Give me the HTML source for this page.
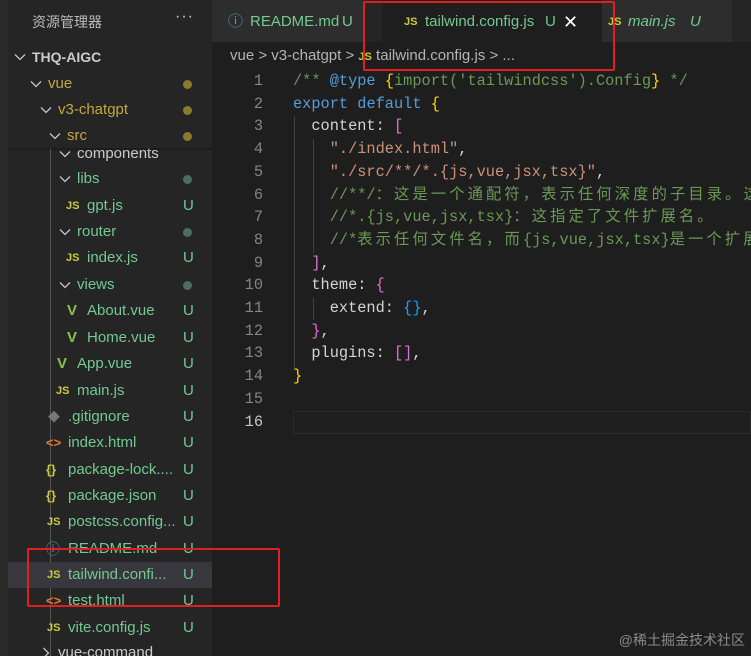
<!DOCTYPE html>
<html><head><meta charset="utf-8"><style>
*{margin:0;padding:0;box-sizing:border-box}
body{width:751px;height:656px;overflow:hidden;background:#1e1e1e;font-family:"Liberation Sans","Noto Sans CJK SC",sans-serif;position:relative}
.strip{position:absolute;left:0;top:0;width:8px;height:656px;background:#2a2a2a}
.side{position:absolute;left:8px;top:0;width:204px;height:656px;background:#252526;overflow:hidden}
.row{position:absolute;left:0;width:204px;height:26px;font-size:15px;line-height:26px;white-space:nowrap}
.row .n{position:absolute}
.row .u{position:absolute;left:175px;color:#73c991}
.dot{position:absolute;left:175px;top:9px;width:9px;height:9px;border-radius:50%}
.g{color:#73c991}.y{color:#c3a83c}
.chev{position:absolute;top:9px;width:12px;height:8px}
.js{position:absolute;font-size:11px;font-weight:bold;color:#cbcb41;top:0}
.vv{position:absolute;color:#8dc149;font-size:15px;font-weight:bold}
.guide{position:absolute;left:42px;top:148px;width:1px;height:508px;background:#585858}
.tabs{position:absolute;left:212px;top:0;width:539px;height:42px;background:#252526}
.tab{position:absolute;top:0;height:42px;font-size:15px;line-height:44px;white-space:nowrap}
.code{position:absolute;left:212px;top:70px;font-family:"Liberation Mono","Noto Sans CJK SC",monospace;font-size:15.3px}
.ln{position:absolute;left:0;width:51px;text-align:right;color:#858585;height:23px;line-height:23px}
.cl{position:absolute;left:81px;color:#d4d4d4;white-space:pre;height:23px;line-height:23px}
.cm{color:#6a9955}.kw{color:#569cd6}.st{color:#ce9178}.b1{color:#ffd700}.b2{color:#da70d6}.b3{color:#179fff}.cc{color:#6a9955}
.cj{letter-spacing:3.1px}
.red{position:absolute;border:2px solid #e02020;border-radius:2px}
</style></head><body>
<svg width="0" height="0" style="position:absolute"><defs><symbol id="cv" viewBox="0 0 12 8"><path d="M1 1.5 L6 6.5 L11 1.5" fill="none" stroke="#c5c5c5" stroke-width="1.3"/></symbol></defs></svg>
<div class="strip"></div>
<div class="side">
 <div style="position:absolute;left:24px;top:12px;font-size:14px;color:#bbb">资源管理器</div>
 <div style="position:absolute;left:167px;top:8px;font-size:16px;color:#ccc;letter-spacing:1px">···</div>
 <div class="guide"></div>
 <div class="row" style="top:44px"><svg class="chev" style="left:6px"><use href="#cv"/></svg><span class="n" style="left:24px;color:#ccc;font-weight:bold;font-size:14px">THQ-AIGC</span></div>
 <div class="row" style="top:71px"><svg class="chev" style="left:22px"><use href="#cv"/></svg><span class="n y" style="left:40px">vue</span><span class="dot" style="background:#8a7b2c"></span></div>
 <div class="row" style="top:97px"><svg class="chev" style="left:32px"><use href="#cv"/></svg><span class="n y" style="left:50px">v3-chatgpt</span><span class="dot" style="background:#8a7b2c"></span></div>
 <div class="row" style="top:123px"><svg class="chev" style="left:41px"><use href="#cv"/></svg><span class="n y" style="left:59px">src</span><span class="dot" style="background:#8a7b2c"></span></div>
 <div class="row" style="top:141px"><svg class="chev" style="left:51px"><use href="#cv"/></svg><span class="n" style="left:69px;color:#ccc">components</span></div>
 <div style="position:absolute;left:0;top:148px;width:204px;height:3px;background:linear-gradient(#111,transparent);opacity:.6"></div>
 <div class="row" style="top:166px"><svg class="chev" style="left:51px"><use href="#cv"/></svg><span class="n g" style="left:69px">libs</span><span class="dot" style="background:#4c6e5c"></span></div>
 <div class="row" style="top:193px"><span class="js" style="left:58px">JS</span><span class="n g" style="left:79px">gpt.js</span><span class="u">U</span></div>
 <div class="row" style="top:219px"><svg class="chev" style="left:51px"><use href="#cv"/></svg><span class="n g" style="left:69px">router</span><span class="dot" style="background:#4c6e5c"></span></div>
 <div class="row" style="top:245px"><span class="js" style="left:58px">JS</span><span class="n g" style="left:79px">index.js</span><span class="u">U</span></div>
 <div class="row" style="top:272px"><svg class="chev" style="left:51px"><use href="#cv"/></svg><span class="n g" style="left:69px">views</span><span class="dot" style="background:#4c6e5c"></span></div>
 <div class="row" style="top:298px"><span class="vv" style="left:59px">V</span><span class="n g" style="left:79px">About.vue</span><span class="u">U</span></div>
 <div class="row" style="top:325px"><span class="vv" style="left:59px">V</span><span class="n g" style="left:79px">Home.vue</span><span class="u">U</span></div>
 <div class="row" style="top:351px"><span class="vv" style="left:49px">V</span><span class="n g" style="left:69px">App.vue</span><span class="u">U</span></div>
 <div class="row" style="top:378px"><span class="js" style="left:48px">JS</span><span class="n g" style="left:69px">main.js</span><span class="u">U</span></div>
 <div class="row" style="top:404px"><span style="position:absolute;left:40px;color:#777;font-size:12px">◆</span><span class="n g" style="left:60px">.gitignore</span><span class="u">U</span></div>
 <div class="row" style="top:430px"><span style="position:absolute;left:38px;color:#e37933;font-size:13px;font-weight:bold">&lt;&gt;</span><span class="n g" style="left:60px">index.html</span><span class="u">U</span></div>
 <div class="row" style="top:457px"><span style="position:absolute;left:38px;color:#cbcb41;font-size:13px;font-weight:bold">{}</span><span class="n g" style="left:60px">package-lock....</span><span class="u">U</span></div>
 <div class="row" style="top:483px"><span style="position:absolute;left:38px;color:#cbcb41;font-size:13px;font-weight:bold">{}</span><span class="n g" style="left:60px">package.json</span><span class="u">U</span></div>
 <div class="row" style="top:509px"><span class="js" style="left:39px">JS</span><span class="n g" style="left:60px">postcss.config...</span><span class="u">U</span></div>
 <div class="row" style="top:536px"><span style="position:absolute;left:38px;color:#519aba;font-size:14px">ⓘ</span><span class="n g" style="left:60px">README.md</span><span class="u">U</span></div>
 <div class="row" style="top:562px;background:#37373d"><span class="js" style="left:39px">JS</span><span class="n g" style="left:60px">tailwind.confi...</span><span class="u">U</span></div>
 <div class="row" style="top:588px"><span style="position:absolute;left:38px;color:#e37933;font-size:13px;font-weight:bold">&lt;&gt;</span><span class="n g" style="left:60px">test.html</span><span class="u">U</span></div>
 <div class="row" style="top:615px"><span class="js" style="left:39px">JS</span><span class="n g" style="left:60px">vite.config.js</span><span class="u">U</span></div>
 <div class="row" style="top:640px"><svg class="chev" style="left:32px;transform:rotate(-90deg)"><use href="#cv"/></svg><span class="n" style="left:50px;color:#ccc">vue-command</span></div>
</div>
<div class="tabs">
 <div class="tab" style="left:0;width:152px;background:#2d2d2d"><span style="position:absolute;left:16px;color:#519aba">ⓘ</span><span style="position:absolute;left:38px;color:#73c991">README.md</span><span style="position:absolute;left:130px;color:#73c991">U</span></div>
 <div class="tab" style="left:170px;width:220px;background:#1e1e1e"><span style="position:absolute;left:22px;color:#cbcb41;font-size:11px;font-weight:bold">JS</span><span style="position:absolute;left:43px;color:#73c991">tailwind.config.js</span><span style="position:absolute;left:163px;color:#73c991">U</span><span style="position:absolute;left:181px;color:#fff;font-size:18px">✕</span></div>
 <div class="tab" style="left:390px;width:130px;background:#2d2d2d"><span style="position:absolute;left:6px;color:#cbcb41;font-size:11px;font-weight:bold">JS</span><span style="position:absolute;left:26px;color:#73c991;font-style:italic">main.js</span><span style="position:absolute;left:88px;color:#73c991;font-style:italic">U</span></div>
</div>
<div style="position:absolute;left:230px;top:47px;font-size:15px;color:#b4b4b4;white-space:nowrap">vue &gt; v3-chatgpt &gt; <span style="color:#cbcb41;font-size:11px;font-weight:bold">JS</span> tailwind.config.js &gt; ...</div>
<div style="position:absolute;left:293px;top:411px;width:458px;height:23px;border:1px solid #2a2a2a"></div>
<div style="position:absolute;left:294px;top:116px;width:1px;height:252px;background:#404040"></div>
<div style="position:absolute;left:313px;top:139px;width:1px;height:114px;background:#404040"></div>
<div style="position:absolute;left:313px;top:298px;width:1px;height:22px;background:#404040"></div>
<div class="code">
 <div class="ln" style="top:0">1</div><div class="cl" style="top:0"><span class="cm">/** </span><span class="kw">@type</span> <span class="b1">{</span><span class="cm">import('tailwindcss').Config</span><span class="b1">}</span><span class="cm"> */</span></div>
 <div class="ln" style="top:22.7px">2</div><div class="cl" style="top:22.7px"><span class="kw">export</span> <span class="kw">default</span> <span class="b1">{</span></div>
 <div class="ln" style="top:45.4px">3</div><div class="cl" style="top:45.4px">  content: <span class="b2">[</span></div>
 <div class="ln" style="top:68.1px">4</div><div class="cl" style="top:68.1px">    <span class="st">"./index.html"</span>,</div>
 <div class="ln" style="top:90.8px">5</div><div class="cl" style="top:90.8px">    <span class="st">"./src/**/*.{js,vue,jsx,tsx}"</span>,</div>
 <div class="ln" style="top:113.5px">6</div><div class="cl cc" style="top:113.5px">    //**/<span class="cj">：这是一个通配符，表示任何深度的子目录。这</span></div>
 <div class="ln" style="top:136.2px">7</div><div class="cl cc" style="top:136.2px">    //*.{js,vue,jsx,tsx}<span class="cj">：这指定了文件扩展名。</span></div>
 <div class="ln" style="top:158.9px">8</div><div class="cl cc" style="top:158.9px">    //*<span class="cj">表示任何文件名，而</span>{js,vue,jsx,tsx}<span class="cj">是一个扩展</span></div>
 <div class="ln" style="top:181.6px">9</div><div class="cl" style="top:181.6px">  <span class="b2">]</span>,</div>
 <div class="ln" style="top:204.3px">10</div><div class="cl" style="top:204.3px">  theme: <span class="b2">{</span></div>
 <div class="ln" style="top:227px">11</div><div class="cl" style="top:227px">    extend: <span class="b3">{}</span>,</div>
 <div class="ln" style="top:249.7px">12</div><div class="cl" style="top:249.7px">  <span class="b2">}</span>,</div>
 <div class="ln" style="top:272.4px">13</div><div class="cl" style="top:272.4px">  plugins: <span class="b2">[]</span>,</div>
 <div class="ln" style="top:295.1px">14</div><div class="cl" style="top:295.1px"><span class="b1">}</span></div>
 <div class="ln" style="top:317.8px">15</div>
 <div class="ln" style="top:340.5px;color:#c6c6c6">16</div>
</div>
<div class="red" style="left:363px;top:1px;width:252px;height:70px"></div>
<div class="red" style="left:27px;top:548px;width:253px;height:59px"></div>
<div style="position:absolute;right:6px;bottom:6px;font-size:14px;color:#8a8a8a">@稀土掘金技术社区</div>
</body></html>
